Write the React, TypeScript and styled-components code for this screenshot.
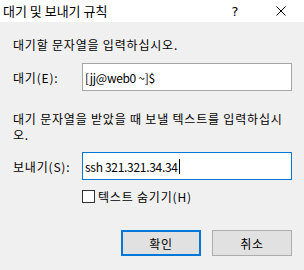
import React, {FC} from 'react';
import styled, {createGlobalStyle} from 'styled-components';

const GlobalStyle = createGlobalStyle`
  html, body {
    margin: 0;
    padding: 0;
    background: #f0f0f0;
  }
  body {
    font-family: "Noto Sans CJK KR", "Noto Sans", sans-serif;
    font-size: 12px;
    letter-spacing: 0.8px;
    color: #000;
  }
`;

const Window = styled.div`
  width: 304px;
  height: 270px;
  background: #f0f0f0;
  overflow: hidden;
  display: flex;
  flex-direction: column;
`;

const TitleBar = styled.div`
  height: 22px;
  background: #fff;
  display: flex;
  align-items: center;
  justify-content: space-between;
`;

const Title = styled.div`
  padding-left: 3px;
  font-size: 13px;
  letter-spacing: 0;
  line-height: 22px;
`;

const CaptionButtons = styled.div`
  display: flex;
  height: 22px;
`;

const CaptionButton = styled.div`
  width: 46px;
  height: 22px;
  display: flex;
  align-items: center;
  justify-content: center;
  font-family: "DejaVu Sans", sans-serif;
  font-size: 13px;
  letter-spacing: 0;
`;

const Body = styled.div`
  padding: 15px 12px 0 13px;
  display: flex;
  flex-direction: column;
`;

const Prompt = styled.div<{ $gap: number }>`
  margin-top: ${(p) => p.$gap}px;
  line-height: 16px;
`;

const FieldRow = styled.div<{ $gap: number }>`
  margin-top: ${(p) => p.$gap}px;
  display: flex;
  align-items: center;
`;

const FieldLabel = styled.div`
  width: 69px;
  flex-shrink: 0;
`;

const TextBox = styled.div<{ $focused?: boolean }>`
  box-sizing: border-box;
  width: 210px;
  height: 28px;
  background: #fff;
  border: 1px solid ${(p) => (p.$focused ? '#0078d7' : '#a5a5a5')};
  padding: 0 2px;
  display: flex;
  align-items: center;
  letter-spacing: -0.3px;
  white-space: pre;
`;

const Caret = styled.span`
  display: inline-block;
  width: 1px;
  height: 15px;
  margin-left: 1px;
  background: #000;
`;

const CheckRow = styled.label`
  margin-top: 8px;
  margin-left: 69px;
  display: flex;
  align-items: center;
  height: 16px;
  gap: 3px;
`;

const CheckBox = styled.span`
  box-sizing: border-box;
  width: 13px;
  height: 13px;
  background: #fff;
  border: 1px solid #333;
`;

const ButtonBar = styled.div`
  margin-top: 26px;
  display: flex;
  justify-content: flex-end;
  gap: 11px;
`;

const DialogButton = styled.div<{ $default?: boolean }>`
  box-sizing: border-box;
  width: 80px;
  height: 26px;
  background: #e1e1e1;
  border: ${(p) => (p.$default ? '2px solid #0078d7' : '1px solid #adadad')};
  display: flex;
  align-items: center;
  justify-content: center;
`;

const App: FC = () => {
  return (
    <Window>
      <GlobalStyle/>
      <TitleBar>
        <Title>대기 및 보내기 규칙</Title>
        <CaptionButtons>
          <CaptionButton>?</CaptionButton>
          <CaptionButton>
            <svg width="10" height="10" viewBox="0 0 10 10">
              <path d="M0.5 0.5 L9.5 9.5 M9.5 0.5 L0.5 9.5" stroke="#000" strokeWidth="1"/>
            </svg>
          </CaptionButton>
        </CaptionButtons>
      </TitleBar>
      <Body>
        <Prompt $gap={0}>대기할 문자열을 입력하십시오.</Prompt>
        <FieldRow $gap={10}>
          <FieldLabel>대기(E):</FieldLabel>
          <TextBox>[jj@web0 ~]$</TextBox>
        </FieldRow>
        <Prompt $gap={20}>대기 문자열을 받았을 때 보낼 텍스트를 입력하십시오.</Prompt>
        <FieldRow $gap={9}>
          <FieldLabel>보내기(S):</FieldLabel>
          <TextBox $focused>ssh 321.321.34.34<Caret/></TextBox>
        </FieldRow>
        <CheckRow>
          <CheckBox/>
          <span>텍스트 숨기기(H)</span>
        </CheckRow>
        <ButtonBar>
          <DialogButton $default>확인</DialogButton>
          <DialogButton>취소</DialogButton>
        </ButtonBar>
      </Body>
    </Window>
  );
};

export default App;
